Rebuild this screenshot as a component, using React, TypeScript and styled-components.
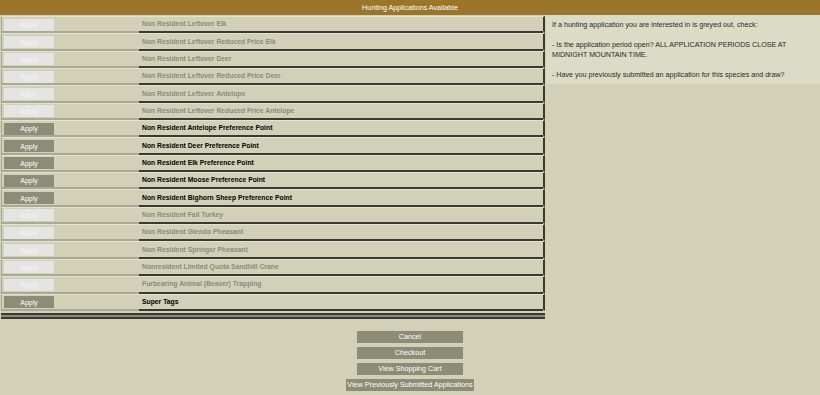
import React from 'react';
import styled, { createGlobalStyle } from 'styled-components';

const GlobalStyle = createGlobalStyle`
    html, body {
        margin: 0;
        padding: 0;
        background: #d2d1b8;
        font-family: "Liberation Sans", Arial, Helvetica, sans-serif;
    }
`

const Page = styled.div`
    width: 820px;
    height: 395px;
    display: flex;
    flex-direction: column;
    background: #d2d1b8;
`
const Header = styled.div`
    height: 15px;
    background: #9c7628;
    color: #fff;
    font-size: 7.2px;
    display: flex;
    align-items: center;
    justify-content: center;
`
const Main = styled.div`
    display: flex;
    align-items: flex-start;
`
const Table = styled.div`
    width: 546px;
    display: flex;
    flex-direction: column;
    padding-top: 1px;
`
const Row = styled.div`
    height: 17.35px;
    box-sizing: border-box;
    display: flex;
    align-items: center;
    margin: 0 1px 0 1px;
    border-top: 1px solid #e4e3d2;
    border-left: 1px solid #a8a795;
    border-right: 2px solid #3a3a34;
    border-bottom: 2px solid #aaa996;
`
const ButtonCell = styled.div`
    width: 137px;
    height: 100%;
    display: flex;
    align-items: center;
    padding: 1px 0 0 2px;
    box-sizing: border-box;
`
const ApplyButton = styled.button<{ $enabled: boolean }>`
    width: 50px;
    height: 12px;
    padding: 0;
    border: none;
    font-family: inherit;
    font-size: 7px;
    color: ${p => (p.$enabled ? '#fff' : '#f4f4f4')};
    background: ${p => (p.$enabled ? '#8d8c76' : '#e4e4e2')};
`
const NameCell = styled.div<{ $enabled: boolean }>`
    flex: 1;
    height: calc(100% + 2px);
    margin-bottom: -2px;
    box-sizing: border-box;
    border-bottom: 2px solid #3a3a34;
    display: flex;
    align-items: center;
    padding: 0 0 1px 3px;
    font-size: 6.8px;
    font-weight: bold;
    color: ${p => (p.$enabled ? '#000' : '#8a8a80')};
`
const TableEnd = styled.div`
    margin: 2px 1px 0 1px;
    height: 2px;
    background: #8a8a80;
    border-top: 2px solid #3a3a34;
    border-bottom: 2px solid #3a3a34;
`
const Info = styled.div`
    flex: 1;
    height: 69px;
    box-sizing: border-box;
    background: #dcdbc5;
    padding: 5px 6px;
    font-size: 7.15px;
    line-height: 10px;
    color: #2a2a2a;
`
const Para = styled.p`
    margin: 0 0 10px 0;
`
const Actions = styled.div`
    display: flex;
    flex-direction: column;
    align-items: center;
    gap: 4px;
    margin-top: 12px;
`
const ActionButton = styled.button`
    min-width: 106px;
    height: 12px;
    padding: 0 1px;
    border: none;
    background: #8d8c76;
    color: #fff;
    font-family: inherit;
    font-size: 7.2px;
`

const applications = [
    { name: 'Non Resident Leftover Elk', enabled: false },
    { name: 'Non Resident Leftover Reduced Price Elk', enabled: false },
    { name: 'Non Resident Leftover Deer', enabled: false },
    { name: 'Non Resident Leftover Reduced Price Deer', enabled: false },
    { name: 'Non Resident Leftover Antelope', enabled: false },
    { name: 'Non Resident Leftover Reduced Price Antelope', enabled: false },
    { name: 'Non Resident Antelope Preference Point', enabled: true },
    { name: 'Non Resident Deer Preference Point', enabled: true },
    { name: 'Non Resident Elk Preference Point', enabled: true },
    { name: 'Non Resident Moose Preference Point', enabled: true },
    { name: 'Non Resident Bighorn Sheep Preference Point', enabled: true },
    { name: 'Non Resident Fall Turkey', enabled: false },
    { name: 'Non Resident Glendo Pheasant', enabled: false },
    { name: 'Non Resident Springer Pheasant', enabled: false },
    { name: 'Nonresident Limited Quota Sandhill Crane', enabled: false },
    { name: 'Furbearing Animal (Beaver) Trapping', enabled: false },
    { name: 'Super Tags', enabled: true },
]

const App: React.FC = () => {
    return (
        <Page>
            <GlobalStyle />
            <Header>Hunting Applications Available</Header>
            <Main>
                <Table>
                    {applications.map(app => (
                        <Row key={app.name}>
                            <ButtonCell>
                                <ApplyButton $enabled={app.enabled} disabled={!app.enabled}>Apply</ApplyButton>
                            </ButtonCell>
                            <NameCell $enabled={app.enabled}>{app.name}</NameCell>
                        </Row>
                    ))}
                    <TableEnd />
                </Table>
                <Info>
                    <Para>If a hunting application you are interested in is greyed out, check:</Para>
                    <Para>- Is the application period open? ALL APPLICATION PERIODS CLOSE AT MIDNIGHT MOUNTAIN TIME.</Para>
                    <Para>- Have you previously submitted an application for this species and draw?</Para>
                </Info>
            </Main>
            <Actions>
                <ActionButton>Cancel</ActionButton>
                <ActionButton>Checkout</ActionButton>
                <ActionButton>View Shopping Cart</ActionButton>
                <ActionButton>View Previously Submitted Applications</ActionButton>
            </Actions>
        </Page>
    );
};

export default App;
